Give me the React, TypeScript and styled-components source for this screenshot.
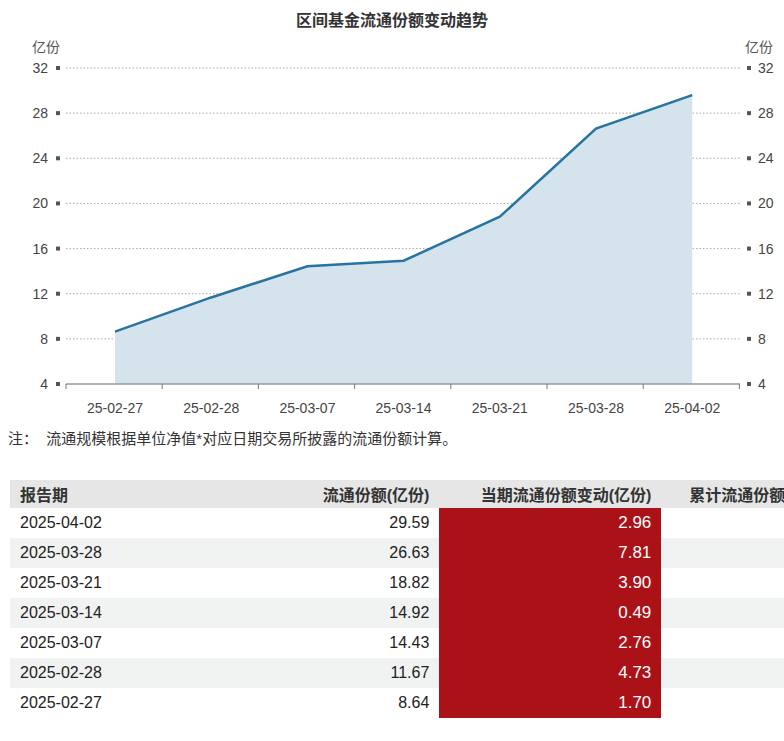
import styled, { createGlobalStyle } from 'styled-components'

const Global = createGlobalStyle`
  body { margin: 0; font-family: "Liberation Sans", "Noto Sans CJK SC", sans-serif; background: #fff; overflow: hidden; }
`
const Page = styled.div`
  width: 784px;
  height: 741px;
  overflow: hidden;
`
const Title = styled.div`
  text-align: center;
  font-size: 16px;
  font-weight: bold;
  color: #333;
  padding-top: 7px;
  height: 25px;
`
const Note = styled.div`
  font-size: 15px;
  color: #333;
  padding-left: 8px;
  margin-top: 7px;
  height: 53px;
`
const Table = styled.table`
  margin-left: 10px;
  width: 860px;
  border-collapse: collapse;
  font-size: 16px;
  color: #222;
  white-space: nowrap;
`
const Th = styled.th<{ $align?: string }>`
  background: #e6e6e6;
  height: 28px;
  padding: 0 10px;
  text-align: ${(p) => p.$align || 'left'};
  font-weight: bold;
  color: #333;
`
const Row = styled.tr<{ $alt: boolean }>`
  background: ${(p) => (p.$alt ? '#f1f2f2' : '#fff')};
  height: 30px;
`
const Td = styled.td<{ $align?: string; $hot?: boolean }>`
  padding: 0 10px;
  text-align: ${(p) => p.$align || 'left'};
  background: ${(p) => (p.$hot ? '#ab1218' : 'transparent')};
  color: ${(p) => (p.$hot ? '#fff' : '#222')};
  font-size: ${(p) => (p.$hot ? '17px' : '16px')};
`

const data = [
  ['25-02-27', 8.64],
  ['25-02-28', 11.67],
  ['25-03-07', 14.43],
  ['25-03-14', 14.92],
  ['25-03-21', 18.82],
  ['25-03-28', 26.63],
  ['25-04-02', 29.59],
] as const

const rows = [
  ['2025-04-02', '29.59', '2.96'],
  ['2025-03-28', '26.63', '7.81'],
  ['2025-03-21', '18.82', '3.90'],
  ['2025-03-14', '14.92', '0.49'],
  ['2025-03-07', '14.43', '2.76'],
  ['2025-02-28', '11.67', '4.73'],
  ['2025-02-27', '8.64', '1.70'],
]

const yOf = (v: number) => 384 - (v - 4) * 11.286
const xOf = (i: number) => 115 + i * 96.2

function Chart() {
  const ticks = [4, 8, 12, 16, 20, 24, 28, 32]
  const pts = data.map((d, i) => `${xOf(i)},${yOf(d[1])}`).join(' ')
  const off = 32
  return (
    <svg width="784" height="388" viewBox={`0 ${off} 784 388`} style={{ display: 'block' }}>
      <text x="32" y="52" fontSize="14" fill="#555">亿份</text>
      <text x="745" y="52" fontSize="14" fill="#555">亿份</text>
      {ticks.map((t) => (
        <g key={t}>
          {t > 4 && <line x1="66" x2="740" y1={yOf(t)} y2={yOf(t)} stroke="#aaa" strokeDasharray="1.5 2" />}
          <rect x="56" y={yOf(t) - 2} width="4" height="4" fill="#555" />
          <rect x="747" y={yOf(t) - 2} width="4" height="4" fill="#555" />
          <text x="48" y={yOf(t) + 5} fontSize="14" fill="#444" textAnchor="end">{t}</text>
          <text x="758" y={yOf(t) + 5} fontSize="14" fill="#444">{t}</text>
        </g>
      ))}
      <polygon points={`${xOf(0)},384 ${pts} ${xOf(6)},384`} fill="#d4e3ec" />
      <polyline points={pts} fill="none" stroke="#2774a2" strokeWidth="2.5" />
      <line x1="66" x2="740" y1="384" y2="384" stroke="#999" strokeWidth="1.5" />
      {[0, 1, 2, 3, 4, 5, 6, 7].map((i) => (
        <line key={i} x1={66 + i * 96.2} x2={66 + i * 96.2} y1="384" y2="389" stroke="#777" />
      ))}
      {data.map((d, i) => (
        <text key={d[0]} x={xOf(i)} y="413" fontSize="14" fill="#444" textAnchor="middle">{d[0]}</text>
      ))}
    </svg>
  )
}

export default function App() {
  return (
    <Page>
      <Global />
      <Title>区间基金流通份额变动趋势</Title>
      <Chart />
      <Note>注：&nbsp;&nbsp;流通规模根据单位净值*对应日期交易所披露的流通份额计算。</Note>
      <Table>
        <colgroup>
          <col style={{ width: 300 }} />
          <col style={{ width: 149 }} />
          <col style={{ width: 225 }} />
          <col />
        </colgroup>
        <thead>
          <tr>
            <Th>报告期</Th>
            <Th $align="right">流通份额(亿份)</Th>
            <Th $align="right">当期流通份额变动(亿份)</Th>
            <Th $align="left" style={{ paddingLeft: 28 }}>累计流通份额变动(亿份)</Th>
          </tr>
        </thead>
        <tbody>
          {rows.map((r, i) => (
            <Row key={r[0]} $alt={i % 2 === 1}>
              <Td>{r[0]}</Td>
              <Td $align="right">{r[1]}</Td>
              <Td $align="right" $hot>{r[2]}</Td>
              <Td />
            </Row>
          ))}
        </tbody>
      </Table>
    </Page>
  )
}
